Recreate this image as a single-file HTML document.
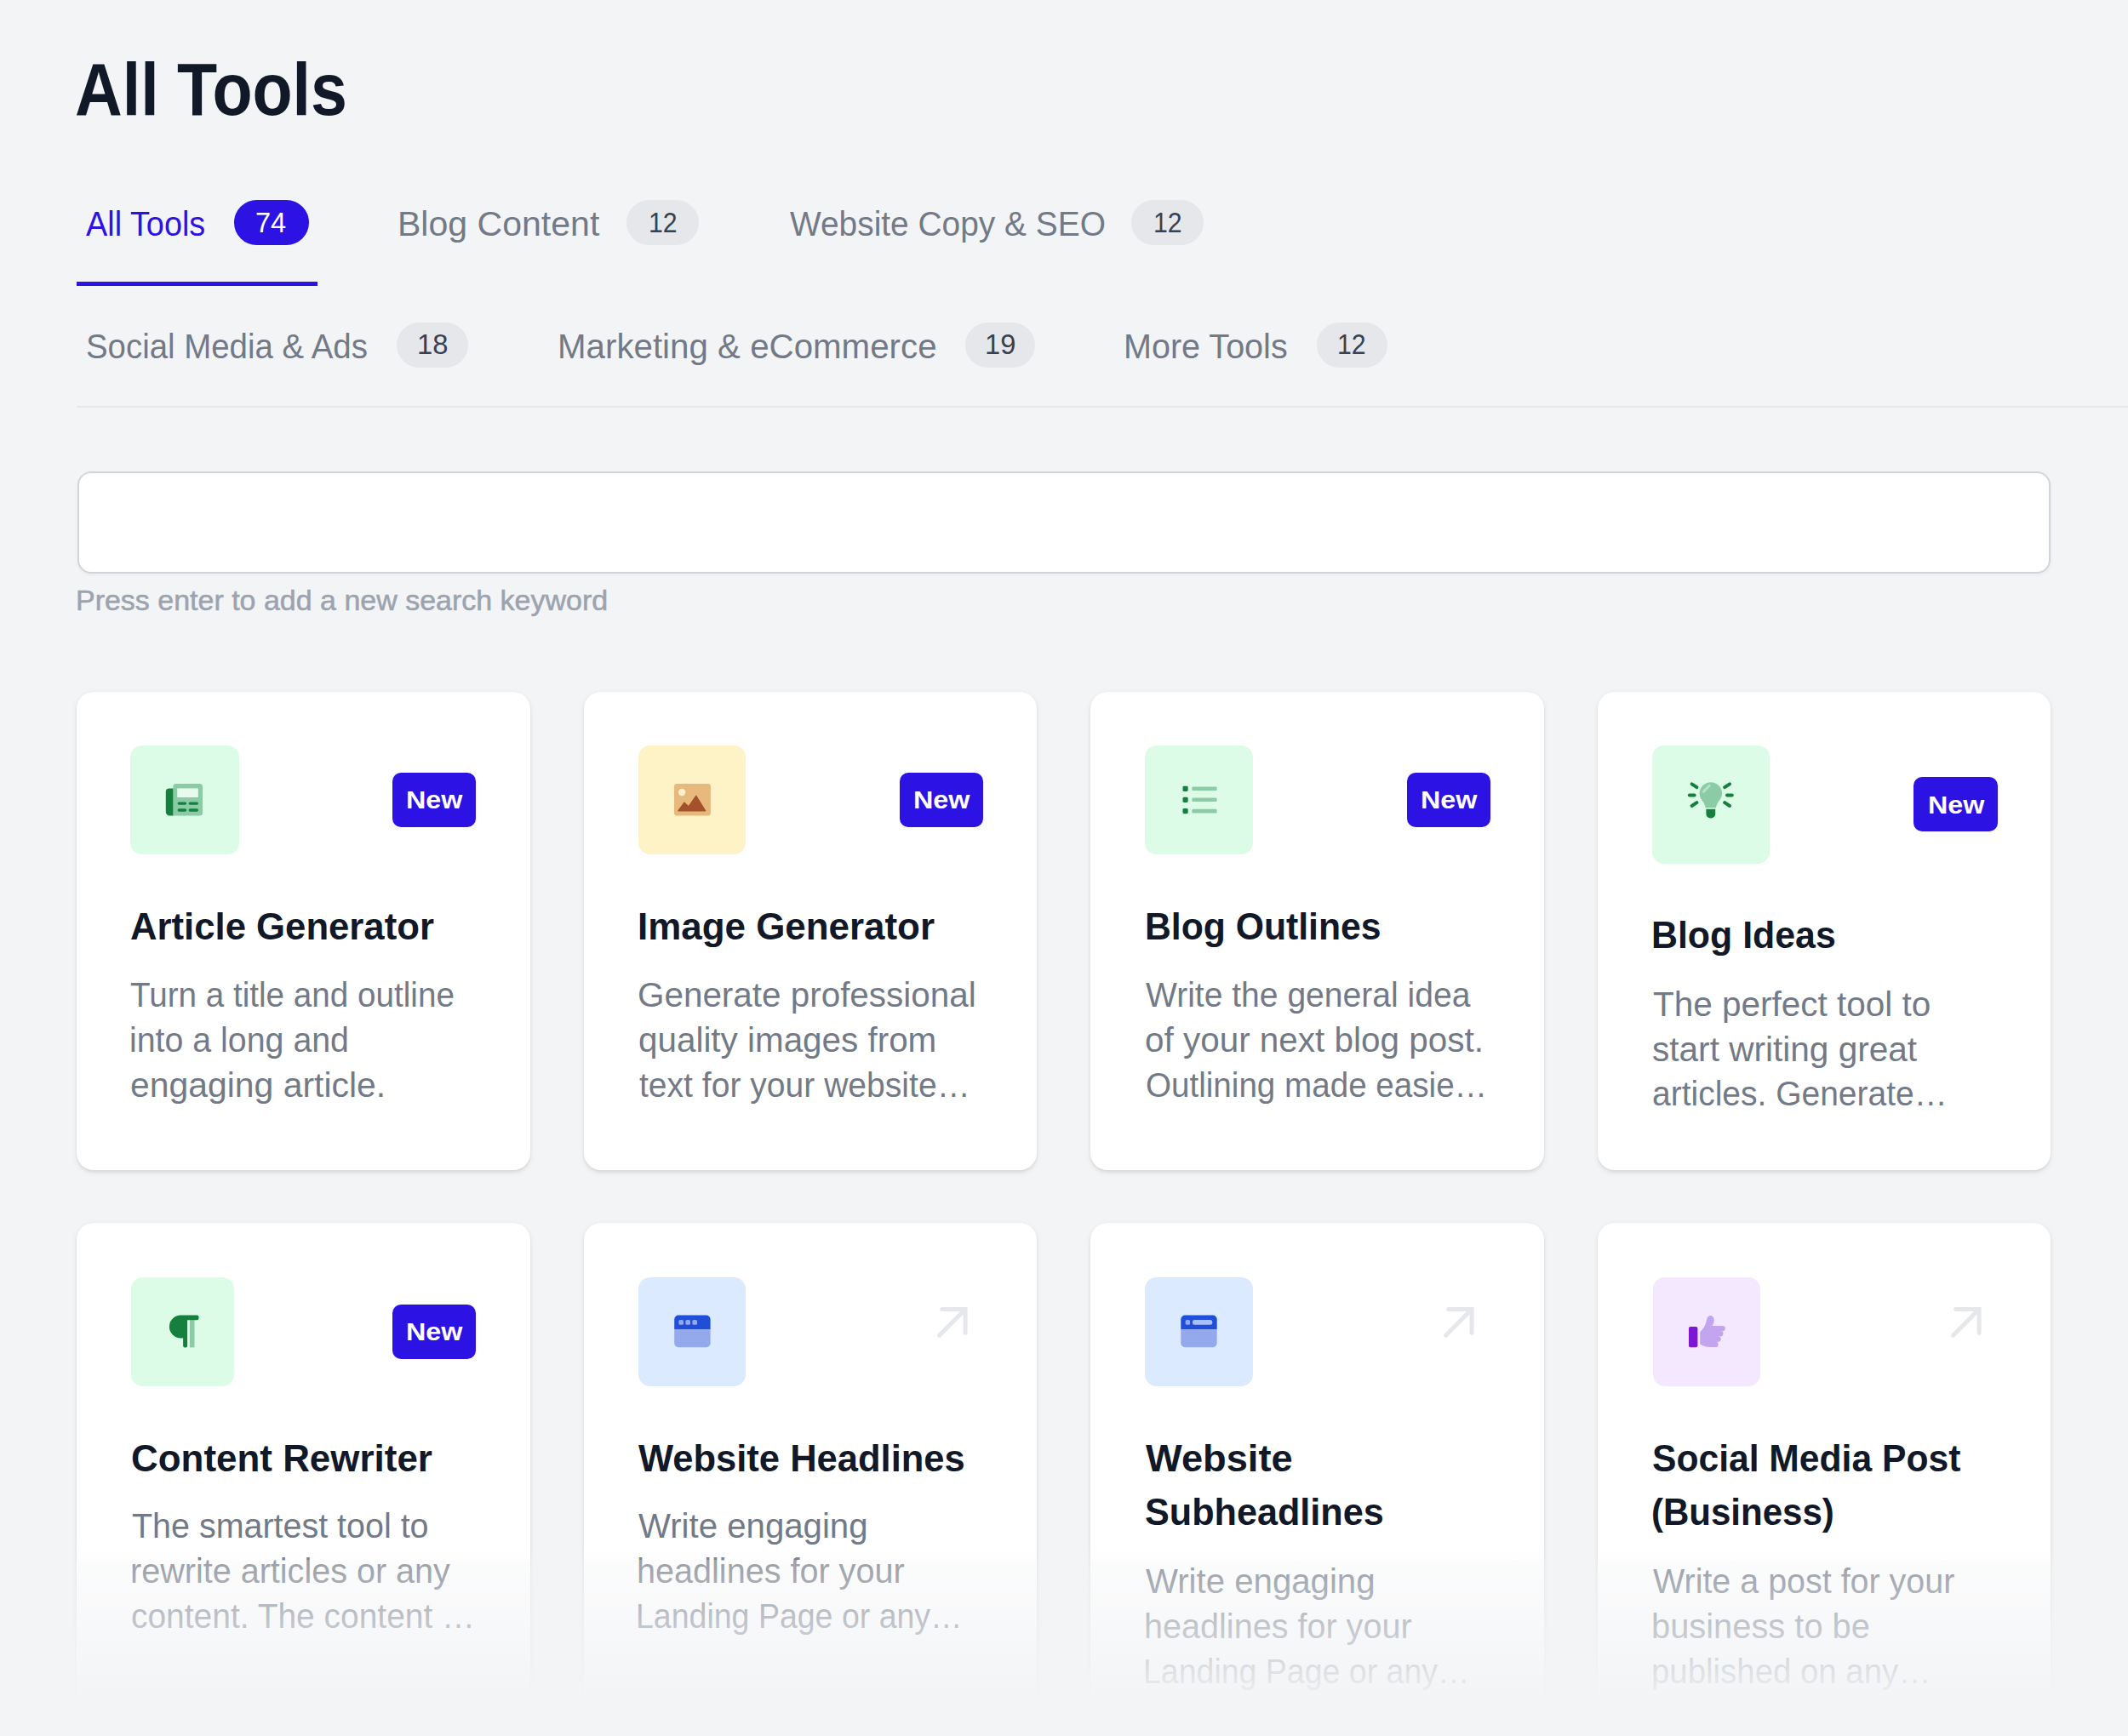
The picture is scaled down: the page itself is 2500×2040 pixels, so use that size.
<!DOCTYPE html>
<html lang="en"><head><meta charset="utf-8"><title>All Tools</title>
<style>
html,body{margin:0;padding:0}
body{width:2500px;height:2040px;overflow:hidden;background:#f3f4f6;position:relative;font-family:"Liberation Sans", sans-serif}
main,nav,section,.tab,.searchbar{position:absolute;left:0;top:0;margin:0;padding:0}
.t{position:absolute;display:block;margin:0;padding:0;white-space:pre;line-height:1;transform-origin:0 0;font-family:"Liberation Sans", sans-serif}
.rule{position:absolute;left:90px;top:476.7px;width:2410px;height:2.5px;background:#e5e7eb}
.ink{position:absolute;left:90px;top:330.5px;width:283px;height:5.5px;background:#2d12e4}
.count{position:absolute;height:53px;border-radius:27px;background:#e5e7eb}
.count.on{background:#2d12e4}
.field{position:absolute;left:90.5px;top:553.5px;width:2318.5px;height:120.5px;box-sizing:border-box;
border:2.5px solid #d1d5db;border-radius:16px;background:#fff;box-shadow:0 2px 4px rgba(0,0,0,.04)}
.card{position:absolute;width:532.4px;background:#fff;border-radius:20px;
box-shadow:0 2.5px 6px rgba(0,0,0,.08),0 1.5px 3px rgba(0,0,0,.06)}
.icon{position:absolute;border-radius:14px}
.icon svg{position:absolute;left:0;top:0;overflow:visible}
.new{position:absolute;width:98.6px;height:64px;border-radius:10px;background:#2d12e4}
.go{position:absolute;overflow:visible}
.card h3,.card p{position:absolute;left:0;top:0;margin:0;padding:0;font-weight:inherit;font-size:inherit}
.fade{position:absolute;left:0;top:1813px;width:2500px;height:227px;
background:linear-gradient(to bottom,rgba(243,244,246,0) 0,rgba(243,244,246,.09) 20px,rgba(243,244,246,.30) 20px,rgba(243,244,246,1) 190px,rgba(243,244,246,1) 100%)}
</style></head>
<body>
<main>
<h1 class="t" style="left:88.25px;top:60.60px;font-size:88px;font-weight:700;color:#111827;transform:scaleX(0.8765);">All Tools</h1>
<nav class="tabs">
<a class="tab active">
<span class="t tab-label" style="left:100.80px;top:243.40px;font-size:41px;font-weight:400;color:#2d12e4;transform:scaleX(0.9233);">All Tools</span>
<span class="count on" style="left:275.0px;top:235.4px;width:88.3px"><span class="t" style="left:25.41px;top:9.20px;font-size:33px;font-weight:400;color:#ffffff;transform:scaleX(0.9872);">74</span></span>
</a>
<a class="tab">
<span class="t tab-label" style="left:466.60px;top:243.40px;font-size:41px;font-weight:400;color:#737a87;transform:scaleX(1.0010);">Blog Content</span>
<span class="count" style="left:735.6px;top:235.4px;width:85.3px"><span class="t" style="left:26.27px;top:9.20px;font-size:33px;font-weight:400;color:#374151;transform:scaleX(0.9175);">12</span></span>
</a>
<a class="tab">
<span class="t tab-label" style="left:927.70px;top:243.40px;font-size:41px;font-weight:400;color:#737a87;transform:scaleX(0.9481);">Website Copy &amp; SEO</span>
<span class="count" style="left:1329.0px;top:235.4px;width:84.8px"><span class="t" style="left:25.67px;top:9.20px;font-size:33px;font-weight:400;color:#374151;transform:scaleX(0.9175);">12</span></span>
</a>
<a class="tab">
<span class="t tab-label" style="left:100.86px;top:386.60px;font-size:41px;font-weight:400;color:#737a87;transform:scaleX(0.9367);">Social Media &amp; Ads</span>
<span class="count" style="left:466.0px;top:378.9px;width:84.3px"><span class="t" style="left:24.42px;top:9.10px;font-size:33px;font-weight:400;color:#374151;transform:scaleX(0.9924);">18</span></span>
</a>
<a class="tab">
<span class="t tab-label" style="left:655.25px;top:386.60px;font-size:41px;font-weight:400;color:#737a87;transform:scaleX(0.9826);">Marketing &amp; eCommerce</span>
<span class="count" style="left:1133.7px;top:378.9px;width:82.3px"><span class="t" style="left:22.82px;top:9.10px;font-size:33px;font-weight:400;color:#374151;transform:scaleX(0.9894);">19</span></span>
</a>
<a class="tab">
<span class="t tab-label" style="left:1320.11px;top:386.60px;font-size:41px;font-weight:400;color:#737a87;transform:scaleX(0.9644);">More Tools</span>
<span class="count" style="left:1546.5px;top:378.9px;width:83.0px"><span class="t" style="left:24.67px;top:9.10px;font-size:33px;font-weight:400;color:#374151;transform:scaleX(0.9175);">12</span></span>
</a>
<div class="ink"></div><div class="rule"></div>
</nav>
<div class="searchbar"><div class="field"></div><p class="t hint" style="left:88.80px;top:688.40px;font-size:34px;font-weight:400;color:#9ca3af;transform:scaleX(0.9993);-webkit-text-stroke:0.55px #9ca3af;">Press enter to add a new search keyword</p></div>
<section class="grid">
<article class="card" style="left:90.2px;top:812.6px;height:562.0px">
<div class="icon" style="left:63.3px;top:63.4px;width:127.4px;height:127.6px;background:#dcfce7"><svg width="127.4" height="127.6" viewBox="0 0 127.4 127.6"><g transform="translate(41.8,45.0)"><path d="M0 9.4 a4 4 0 0 1 4 -4 h5 v32.2 h-4.5 a4.5 4.5 0 0 1 -4.5 -4.5z" fill="#15803d"/><path d="M8.6 3.5 a3.5 3.5 0 0 1 3.5 -3.5 h27.7 a3.5 3.5 0 0 1 3.5 3.5 v30.6 a3.5 3.5 0 0 1 -3.5 3.5 h-31.2z" fill="#8bcba5"/><rect x="13.4" y="5.4" width="24.6" height="10.6" fill="#e6fbee"/><rect x="13.8" y="21.4" width="10.6" height="3.4" rx="1.7" fill="#15803d"/><rect x="26.8" y="21.4" width="11.4" height="3.4" rx="1.7" fill="#15803d"/><rect x="13.8" y="29.3" width="10.6" height="3.4" rx="1.7" fill="#15803d"/><rect x="26.8" y="29.3" width="11.4" height="3.4" rx="1.7" fill="#15803d"/></g></svg></div>
<span class="new" style="left:370.4px;top:95.3px"><span class="t" style="left:16.65px;top:17.60px;font-size:30px;font-weight:700;color:#ffffff;transform:scaleX(1.0771);">New</span></span>
<h3><span class="t" style="left:62.91px;top:254.30px;font-size:44px;font-weight:700;color:#111827;transform:scaleX(0.9929);">Article Generator</span></h3>
<p><span class="t" style="left:62.90px;top:336.80px;font-size:40px;font-weight:400;color:#737a87;transform:scaleX(0.9660);">Turn a title and outline</span><span class="t" style="left:62.03px;top:389.60px;font-size:40px;font-weight:400;color:#737a87;transform:scaleX(0.9830);">into a long and</span><span class="t" style="left:62.98px;top:442.00px;font-size:40px;font-weight:400;color:#737a87;transform:scaleX(1.0227);">engaging article.</span></p>
</article>
<article class="card" style="left:685.7px;top:812.6px;height:562.0px">
<div class="icon" style="left:63.9px;top:63.4px;width:126.8px;height:127.6px;background:#fef3c7"><svg width="126.8" height="127.6" viewBox="0 0 126.8 127.6"><g transform="translate(42.0,45.0)"><rect x="0" y="0" width="42.9" height="37.6" rx="3" fill="#e8b97c"/><circle cx="9.2" cy="10" r="4.2" fill="#fdf0cf"/><path d="M5 31.8 L12 22.2 L17 27 L25.8 14.4 L36.6 31.8z" fill="#a4512c" stroke="#a4512c" stroke-width="1.5" stroke-linejoin="round"/></g></svg></div>
<span class="new" style="left:370.9px;top:95.3px"><span class="t" style="left:16.65px;top:17.60px;font-size:30px;font-weight:700;color:#ffffff;transform:scaleX(1.0771);">New</span></span>
<h3><span class="t" style="left:63.00px;top:254.30px;font-size:44px;font-weight:700;color:#111827;transform:scaleX(0.9981);">Image Generator</span></h3>
<p><span class="t" style="left:62.98px;top:336.80px;font-size:40px;font-weight:400;color:#737a87;transform:scaleX(1.0103);">Generate professional</span><span class="t" style="left:63.99px;top:389.60px;font-size:40px;font-weight:400;color:#737a87;transform:scaleX(1.0100);">quality images from</span><span class="t" style="left:65.00px;top:442.00px;font-size:40px;font-weight:400;color:#737a87;transform:scaleX(0.9768);">text for your website…</span></p>
</article>
<article class="card" style="left:1281.3px;top:812.6px;height:562.0px">
<div class="icon" style="left:64.1px;top:63.4px;width:126.9px;height:127.6px;background:#dcfce7"><svg width="126.9" height="127.6" viewBox="0 0 126.9 127.6"><g transform="translate(43.9,45.0)"><rect x="0.6" y="2.7" width="6.2" height="6.2" rx="1.4" fill="#15803d"/><rect x="11.5" y="3.5" width="29.2" height="4.6" rx="1.2" fill="#8bcba5"/><rect x="0.6" y="15.7" width="6.2" height="6.2" rx="1.4" fill="#15803d"/><rect x="11.5" y="16.5" width="29.2" height="4.6" rx="1.2" fill="#8bcba5"/><rect x="0.6" y="29.0" width="6.2" height="6.2" rx="1.4" fill="#15803d"/><rect x="11.5" y="29.8" width="29.2" height="4.6" rx="1.2" fill="#8bcba5"/></g></svg></div>
<span class="new" style="left:371.3px;top:95.3px"><span class="t" style="left:16.65px;top:17.60px;font-size:30px;font-weight:700;color:#ffffff;transform:scaleX(1.0771);">New</span></span>
<h3><span class="t" style="left:63.56px;top:254.30px;font-size:44px;font-weight:700;color:#111827;transform:scaleX(0.9705);">Blog Outlines</span></h3>
<p><span class="t" style="left:64.80px;top:336.80px;font-size:40px;font-weight:400;color:#737a87;transform:scaleX(0.9763);">Write the general idea</span><span class="t" style="left:63.79px;top:389.60px;font-size:40px;font-weight:400;color:#737a87;transform:scaleX(1.0109);">of your next blog post.</span><span class="t" style="left:64.54px;top:442.00px;font-size:40px;font-weight:400;color:#737a87;transform:scaleX(0.9649);">Outlining made easie…</span></p>
</article>
<article class="card" style="left:1876.9px;top:812.6px;height:562.0px">
<div class="icon" style="left:64.3px;top:63.4px;width:138.0px;height:138.6px;background:#dcfce7"><svg width="138.0" height="138.6" viewBox="0 0 138.0 138.6"><g transform="translate(68.8,56.8)"><path d="M0 -13.6 a13.2 13.2 0 0 1 13.2 13.2 c0 4.6 -2.6 7.4 -4.6 10.4 c-1.2 1.8 -2 4 -2.4 6.4 h-12.4 c-0.4 -2.4 -1.2 -4.6 -2.4 -6.4 c-2 -3 -4.6 -5.8 -4.6 -10.4 a13.2 13.2 0 0 1 13.2 -13.2z" fill="#8bcba5"/><path d="M-8.4 -2.4 L-1.6 -9.6" stroke="#b5e1c5" stroke-width="3" fill="none" stroke-linecap="round"/><path d="M-5.4 18 h10.8 v5.6 a5 5 0 0 1 -5 5 h-0.8 a5 5 0 0 1 -5 -5z" fill="#15803d"/><g stroke="#15803d" stroke-width="4" stroke-linecap="round"><path d="M-22.2 -11.4 l5.8 3.8"/><path d="M-25 1.6 h5.8"/><path d="M-22.2 14.2 l5.8 -3.8"/><path d="M22.2 -11.4 l-5.8 3.8"/><path d="M25 1.6 h-5.8"/><path d="M22.2 14.2 l-5.8 -3.8"/></g></g></svg></div>
<span class="new" style="left:371.4px;top:100.8px"><span class="t" style="left:16.65px;top:17.60px;font-size:30px;font-weight:700;color:#ffffff;transform:scaleX(1.0771);">New</span></span>
<h3><span class="t" style="left:63.05px;top:264.40px;font-size:44px;font-weight:700;color:#111827;transform:scaleX(0.9743);">Blog Ideas</span></h3>
<p><span class="t" style="left:65.00px;top:347.40px;font-size:40px;font-weight:400;color:#737a87;transform:scaleX(1.0123);">The perfect tool to</span><span class="t" style="left:63.99px;top:400.20px;font-size:40px;font-weight:400;color:#737a87;transform:scaleX(1.0142);">start writing great</span><span class="t" style="left:64.03px;top:452.60px;font-size:40px;font-weight:400;color:#737a87;transform:scaleX(0.9748);">articles. Generate…</span></p>
</article>
<article class="card" style="left:90.2px;top:1437.4px;height:700.0px">
<div class="icon" style="left:63.4px;top:63.8px;width:121.8px;height:127.4px;background:#dcfce7"><svg width="121.8" height="127.4" viewBox="0 0 121.8 127.4"><g transform="translate(44.9,44.6)"><rect x="24" y="5.6" width="5.6" height="32.2" fill="#8bcba5"/><path d="M13.4 0 h19.2 a2 2 0 0 1 2 2 v1.6 a2 2 0 0 1 -2 2 h-11.4 v30.2 a2 2 0 0 1 -2 2 h-1 a2 2 0 0 1 -2 -2 v-9 h-2.8 a13.4 13.4 0 0 1 0 -26.8z" fill="#15803d"/></g></svg></div>
<span class="new" style="left:370.4px;top:95.4px"><span class="t" style="left:16.65px;top:17.60px;font-size:30px;font-weight:700;color:#ffffff;transform:scaleX(1.0771);">New</span></span>
<h3><span class="t" style="left:63.90px;top:254.20px;font-size:44px;font-weight:700;color:#111827;transform:scaleX(0.9985);">Content Rewriter</span></h3>
<p><span class="t" style="left:64.90px;top:336.00px;font-size:40px;font-weight:400;color:#737a87;transform:scaleX(0.9860);">The smartest tool to</span><span class="t" style="left:62.92px;top:389.00px;font-size:40px;font-weight:400;color:#737a87;transform:scaleX(0.9888);">rewrite articles or any</span><span class="t" style="left:63.93px;top:442.00px;font-size:40px;font-weight:400;color:#737a87;transform:scaleX(0.9734);">content. The content …</span></p>
</article>
<article class="card" style="left:685.7px;top:1437.4px;height:700.0px">
<div class="icon" style="left:63.9px;top:63.8px;width:126.8px;height:127.4px;background:#dbeafe"><svg width="126.8" height="127.4" viewBox="0 0 126.8 127.4"><g transform="translate(42.2,44.6)"><path d="M0 16.4 h42.4 v16.2 a5 5 0 0 1 -5 5 h-32.4 a5 5 0 0 1 -5 -5z" fill="#93a9ec"/><path d="M0 5 a5 5 0 0 1 5 -5 h32.4 a5 5 0 0 1 5 5 v11.4 h-42.4z" fill="#214ed9"/><rect x="5.2" y="5.4" width="5.6" height="5.8" rx="1.6" fill="#93a9ec"/><rect x="13.2" y="5.4" width="5.6" height="5.8" rx="1.6" fill="#93a9ec"/><rect x="21.2" y="5.4" width="5.6" height="5.8" rx="1.6" fill="#93a9ec"/></g></svg></div>
<svg class="go" style="left:415.1px;top:98.5px" width="40" height="40" viewBox="0 0 40 40"><g stroke="#e5e7eb" stroke-width="5" fill="none" stroke-linecap="round"><path d="M5.8 2.5 H33.1 V30.2"/><path d="M2.6 33.2 L32.5 3.1"/></g></svg>
<h3><span class="t" style="left:64.60px;top:254.20px;font-size:44px;font-weight:700;color:#111827;transform:scaleX(0.9891);">Website Headlines</span></h3>
<p><span class="t" style="left:64.60px;top:336.00px;font-size:40px;font-weight:400;color:#737a87;transform:scaleX(1.0046);">Write engaging</span><span class="t" style="left:62.62px;top:389.00px;font-size:40px;font-weight:400;color:#737a87;transform:scaleX(0.9894);">headlines for your</span><span class="t" style="left:61.79px;top:442.00px;font-size:40px;font-weight:400;color:#737a87;transform:scaleX(0.9375);">Landing Page or any…</span></p>
</article>
<article class="card" style="left:1281.3px;top:1437.4px;height:700.0px">
<div class="icon" style="left:64.1px;top:63.8px;width:126.9px;height:127.4px;background:#dbeafe"><svg width="126.9" height="127.4" viewBox="0 0 126.9 127.4"><g transform="translate(42.3,44.6)"><path d="M0 16.4 h42.4 v16.2 a5 5 0 0 1 -5 5 h-32.4 a5 5 0 0 1 -5 -5z" fill="#93a9ec"/><path d="M0 5 a5 5 0 0 1 5 -5 h32.4 a5 5 0 0 1 5 5 v11.4 h-42.4z" fill="#214ed9"/><rect x="5.4" y="5.4" width="5.4" height="5.8" rx="1.6" fill="#93a9ec"/><rect x="13.6" y="5.4" width="23.4" height="5.8" rx="2.4" fill="#a9c0f3"/></g></svg></div>
<svg class="go" style="left:415.1px;top:98.5px" width="40" height="40" viewBox="0 0 40 40"><g stroke="#e5e7eb" stroke-width="5" fill="none" stroke-linecap="round"><path d="M5.8 2.5 H33.1 V30.2"/><path d="M2.6 33.2 L32.5 3.1"/></g></svg>
<h3><span class="t" style="left:64.60px;top:254.20px;font-size:44px;font-weight:700;color:#111827;transform:scaleX(1.0281);">Website</span><span class="t" style="left:63.62px;top:317.40px;font-size:44px;font-weight:700;color:#111827;transform:scaleX(0.9813);">Subheadlines</span></h3>
<p><span class="t" style="left:64.60px;top:400.20px;font-size:40px;font-weight:400;color:#737a87;transform:scaleX(1.0046);">Write engaging</span><span class="t" style="left:62.62px;top:453.20px;font-size:40px;font-weight:400;color:#737a87;transform:scaleX(0.9894);">headlines for your</span><span class="t" style="left:61.79px;top:506.20px;font-size:40px;font-weight:400;color:#737a87;transform:scaleX(0.9372);">Landing Page or any…</span></p>
</article>
<article class="card" style="left:1876.9px;top:1437.4px;height:700.0px">
<div class="icon" style="left:64.7px;top:63.8px;width:126.8px;height:127.4px;background:#f3e8ff"><svg width="126.8" height="127.4" viewBox="0 0 126.8 127.4"><g transform="translate(42.0,44.8)"><rect x="0" y="13.2" width="10.4" height="24.2" rx="2" fill="#7e16d6"/><g fill="#c3a4ef"><path d="M13.2 19.5 c3.6 -3.4 6.2 -7.4 7.4 -12.6 c0.6 -2.8 1.6 -6.6 4.6 -6.6 c3.4 0 4.6 2.6 4.6 5.2 c0 2.6 -1.2 4.8 -2.2 6.6 H38 L32 37.3 H25 c-4.6 0 -8 -1.6 -11.8 -3.6z"/><rect x="24" y="12.1" width="18.8" height="6.3" rx="3.1"/><rect x="24" y="18.3" width="16.5" height="6.3" rx="3.1"/><rect x="24" y="24.6" width="13.7" height="6.3" rx="3.1"/><rect x="24" y="31" width="10.6" height="6.3" rx="3.1"/></g></g></svg></div>
<svg class="go" style="left:415.1px;top:98.5px" width="40" height="40" viewBox="0 0 40 40"><g stroke="#e5e7eb" stroke-width="5" fill="none" stroke-linecap="round"><path d="M5.8 2.5 H33.1 V30.2"/><path d="M2.6 33.2 L32.5 3.1"/></g></svg>
<h3><span class="t" style="left:63.93px;top:254.20px;font-size:44px;font-weight:700;color:#111827;transform:scaleX(0.9685);">Social Media Post</span><span class="t" style="left:62.99px;top:317.40px;font-size:44px;font-weight:700;color:#111827;transform:scaleX(0.9549);">(Business)</span></h3>
<p><span class="t" style="left:64.90px;top:400.20px;font-size:40px;font-weight:400;color:#737a87;transform:scaleX(0.9859);">Write a post for your</span><span class="t" style="left:62.91px;top:453.20px;font-size:40px;font-weight:400;color:#737a87;transform:scaleX(0.9961);">business to be</span><span class="t" style="left:62.98px;top:506.20px;font-size:40px;font-weight:400;color:#737a87;transform:scaleX(0.9596);">published on any…</span></p>
</article>
</section>
<div class="fade"></div>
</main>
</body></html>
